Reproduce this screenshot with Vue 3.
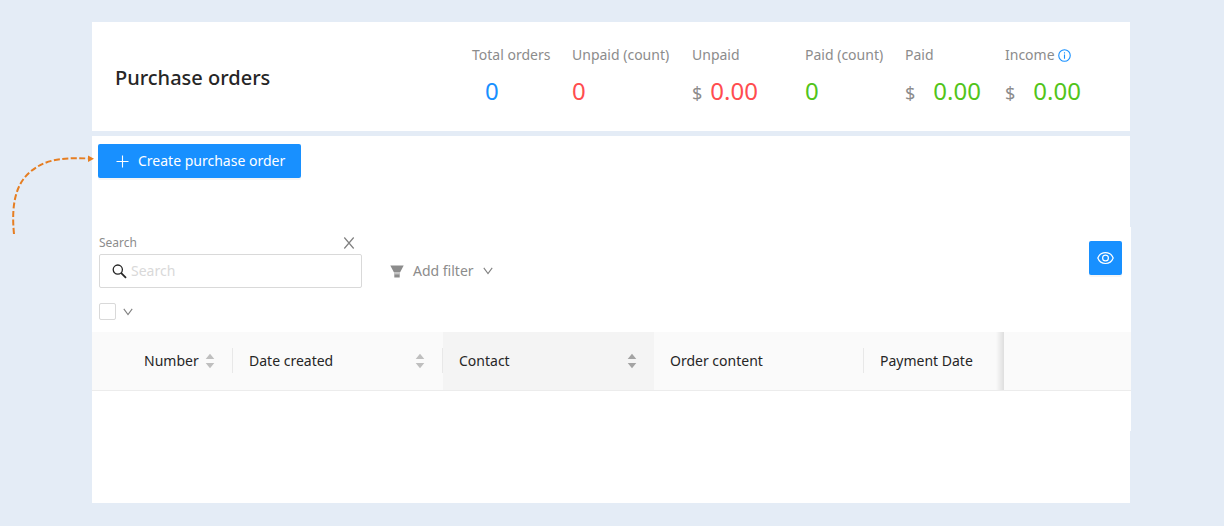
<script setup>
import { ref } from 'vue'

const stats = [
  { label: 'Total orders', value: '0', tone: 'blue', indent: true },
  { label: 'Unpaid (count)', value: '0', tone: 'red' },
  { label: 'Unpaid', value: '0.00', tone: 'red', currency: 'near' },
  { label: 'Paid (count)', value: '0', tone: 'green' },
  { label: 'Paid', value: '0.00', tone: 'green', currency: 'far' },
  { label: 'Income', value: '0.00', tone: 'green', currency: 'far', info: true },
]

const columns = [
  { key: 'number', title: 'Number', sortable: true, divider: true },
  { key: 'created', title: 'Date created', sortable: true, divider: true },
  { key: 'contact', title: 'Contact', sortable: true, active: true },
  { key: 'content', title: 'Order content', divider: true },
  { key: 'payment', title: 'Payment Date', shade: true },
]

const query = ref('')
const allSelected = ref(false)
</script>

<template>
  <div class="page">
    <svg class="pointer" width="96" height="96" viewBox="0 0 96 96" aria-hidden="true">
      <path d="M14 84C11 54 16 34 30 22C43 11 58 7 88 8.500" fill="none" stroke="#e67e22" stroke-width="2" stroke-dasharray="6 2.500" />
      <path d="M88 5.500L94 8.800L88 12Z" fill="#e67e22" />
    </svg>

    <header class="summary">
      <h1>Purchase orders</h1>
      <dl class="stats">
        <div v-for="s in stats" :key="s.label" class="stat">
          <dt>
            {{ s.label }}
            <svg v-if="s.info" class="info" width="13" height="13" viewBox="0 0 14 14" aria-hidden="true">
              <circle cx="7" cy="7" r="6.200" fill="none" stroke="#1890ff" stroke-width="1.200" />
              <path d="M7 6v4.400M7 3.400v1.400" stroke="#1890ff" stroke-width="1.200" />
            </svg>
          </dt>
          <dd :class="[s.tone, s.currency, { indent: s.indent }]">
            <span v-if="s.currency" class="currency">$</span>
            <span>{{ s.value }}</span>
          </dd>
        </div>
      </dl>
    </header>

    <main class="panel">
      <div class="actions">
        <button type="button" class="primary create">
          <svg width="13" height="13" viewBox="0 0 13 13" aria-hidden="true">
            <path d="M6.500 .5v12M.5 6.500h12" stroke="#fff" stroke-width="1.100" />
          </svg>
          <span>Create purchase order</span>
        </button>
      </div>

      <section class="listing">
        <div class="filters">
          <div class="search">
            <div class="search-head">
              <label for="search">Search</label>
              <button type="button" class="plain" aria-label="Remove filter">
                <svg width="12" height="12" viewBox="0 0 12 12">
                  <path d="M1.300 .5L10.700 11.500M10.700 .5L1.300 11.500" fill="none" stroke="#808080" stroke-width="1.200" />
                </svg>
              </button>
            </div>
            <div class="search-box">
              <svg width="15" height="15" viewBox="0 0 15 15" aria-hidden="true">
                <circle cx="5.800" cy="5.600" r="4.600" fill="none" stroke="#262626" stroke-width="1.300" />
                <path d="M9 8.800L14 13.800" stroke="#262626" stroke-width="1.700" />
              </svg>
              <input id="search" v-model="query" type="text" placeholder="Search" />
            </div>
          </div>
          <button type="button" class="plain add-filter">
            <svg width="14" height="13" viewBox="0 0 14 13" aria-hidden="true">
              <path d="M.3 .5h13.400L10 7.500H4Z" fill="#8c8c8c" />
              <path d="M4 7.500h6V9.500H4Z" fill="#c4c4c4" />
              <path d="M4.300 9.300h5.400V12.500H4.300Z" fill="#8c8c8c" />
            </svg>
            <span>Add filter</span>
            <svg width="10" height="8" viewBox="0 0 10 8" aria-hidden="true">
              <path d="M.8 .8L5 6.500L9.200 .8" fill="none" stroke="#808080" stroke-width="1.100" />
            </svg>
          </button>
          <button type="button" class="primary view" aria-label="Visible columns">
            <svg width="17" height="14" viewBox="0 0 17 14">
              <path d="M.8 7C3.600 -.3 13.400 -.3 16.200 7C13.400 14.300 3.600 14.300 .8 7Z" fill="none" stroke="#fff" stroke-width="1.200" />
              <circle cx="8.500" cy="7" r="2.900" fill="none" stroke="#fff" stroke-width="1.200" />
            </svg>
          </button>
        </div>

        <div class="selection">
          <input v-model="allSelected" type="checkbox" aria-label="Select all" />
          <button type="button" class="plain" aria-label="Selection options">
            <svg width="10" height="8" viewBox="0 0 10 8">
              <path d="M.8 .8L5 6.500L9.200 .8" fill="none" stroke="#808080" stroke-width="1.100" />
            </svg>
          </button>
        </div>

        <table>
          <colgroup>
            <col v-for="c in columns" :key="c.key" :class="c.key" />
            <col />
          </colgroup>
          <thead>
            <tr>
              <th v-for="c in columns" :key="c.key" scope="col" :class="[c.key, { active: c.active, shade: c.shade }]">
                <div class="cell" :class="{ divider: c.divider }">
                  <span>{{ c.title }}</span>
                  <svg v-if="c.sortable" class="sorter" width="10" height="16" viewBox="0 0 10 16" aria-hidden="true">
                    <path d="M5 .8L9.300 6H.7ZM5 15.200L.7 10H9.300Z" fill="currentColor" />
                  </svg>
                </div>
              </th>
              <td></td>
            </tr>
          </thead>
        </table>
      </section>
    </main>
  </div>
</template>

<style>
body {
  background: #e4ecf6;
}
</style>

<style scoped>
.page {
  position: relative;
  box-sizing: border-box;
  min-height: 100vh;
  padding: 22px 94px 23px 92px;
  display: flex;
  flex-direction: column;
  gap: 5px;
  font: 14px/22px "Segoe UI", "Noto Sans", sans-serif;
  color: #262626;
}
.page * {
  box-sizing: border-box;
}
.pointer {
  position: absolute;
  left: 0;
  top: 150px;
}
svg {
  display: block;
  flex: none;
}
button,
input {
  font: inherit;
  margin: 0;
}
.summary {
  display: flex;
  align-items: flex-start;
  justify-content: space-between;
  background: #fff;
  padding: 22px 25px 22px 23px;
}
h1 {
  margin: 19px 0 0;
  font-size: 20px;
  line-height: 30px;
  font-weight: 500;
}
.stats {
  display: grid;
  grid-template-columns: 100px 120px 113px 100px 100px 100px;
  margin: 0;
}
dt {
  display: flex;
  align-items: center;
  gap: 3px;
  color: #8c8c8c;
  white-space: nowrap;
}
dd {
  display: flex;
  align-items: baseline;
  margin: 9px 0 0;
  font-size: 24px;
  line-height: 32px;
}
dd.indent {
  padding-left: 13px;
}
.near {
  gap: 8px;
}
.far {
  gap: 18px;
}
.currency {
  font-size: 18px;
  color: #8c8c8c;
}
.blue {
  color: #1890ff;
}
.red {
  color: #ff4d4f;
}
.green {
  color: #52c41a;
}
.panel {
  flex: 1;
  background: #fff;
}
.actions {
  padding: 8px 6px 49px;
}
.primary {
  display: flex;
  align-items: center;
  justify-content: center;
  height: 34px;
  border: 0;
  border-radius: 2px;
  background: #1890ff;
  color: #fff;
  box-shadow: 0 2px 0 rgba(0, 0, 0, 0.04);
}
.create {
  gap: 9px;
  padding: 0 16px 0 18px;
}
.plain {
  display: flex;
  align-items: center;
  padding: 0;
  border: 0;
  background: none;
  color: #8c8c8c;
}
.listing {
  margin-right: -1px;
  padding-bottom: 40px;
  background: #fff;
}
.filters {
  display: flex;
  padding: 5px 9px 0 7px;
}
.search {
  width: 263px;
}
.search-head {
  display: flex;
  align-items: center;
  justify-content: space-between;
  height: 22px;
  padding-right: 7px;
  font-size: 12px;
  color: #8c8c8c;
}
.search-box {
  display: flex;
  align-items: center;
  gap: 4px;
  height: 34px;
  padding: 0 12px;
  border: 1px solid #d9d9d9;
  border-radius: 2px;
}
.search-box input {
  flex: 1;
  min-width: 0;
  padding: 0;
  border: 0;
  outline: 0;
  background: none;
  color: inherit;
}
.search-box input::placeholder {
  color: #d9d9d9;
  opacity: 1;
}
.add-filter {
  align-self: flex-end;
  gap: 9px;
  height: 34px;
  margin-left: 28px;
}
.view {
  width: 33px;
  margin: 9px 0 0 auto;
  padding: 0;
}
.selection {
  display: flex;
  align-items: center;
  gap: 7px;
  padding: 15px 7px 12px;
}
.selection input {
  appearance: none;
  width: 17px;
  height: 17px;
  border: 1px solid #d9d9d9;
  border-radius: 2px;
  background: #fff;
}
.selection input:checked {
  background: #1890ff;
}
table {
  width: 100%;
  table-layout: fixed;
  border-collapse: collapse;
}
col.number {
  width: 141px;
}
col.created {
  width: 210px;
}
col.contact {
  width: 211px;
}
col.content {
  width: 210px;
}
col.payment {
  width: 140px;
}
th,
td {
  height: 58px;
  padding: 0;
  border-bottom: 1px solid #ececec;
  background: #fafafa;
  font-weight: 400;
  text-align: left;
}
th.active {
  background: #f4f4f4;
}
th.shade {
  background: linear-gradient(to left, #dedede, #fafafa 8px);
}
.cell {
  display: flex;
  align-items: center;
  justify-content: space-between;
  height: 25px;
  padding: 0 17px 0 16px;
  white-space: nowrap;
}
.number .cell {
  padding-left: 52px;
}
.divider {
  border-right: 1px solid #e8e8e8;
}
.sorter {
  color: #bfbfbf;
}
.active .sorter {
  color: #a3a3a3;
}
</style>
